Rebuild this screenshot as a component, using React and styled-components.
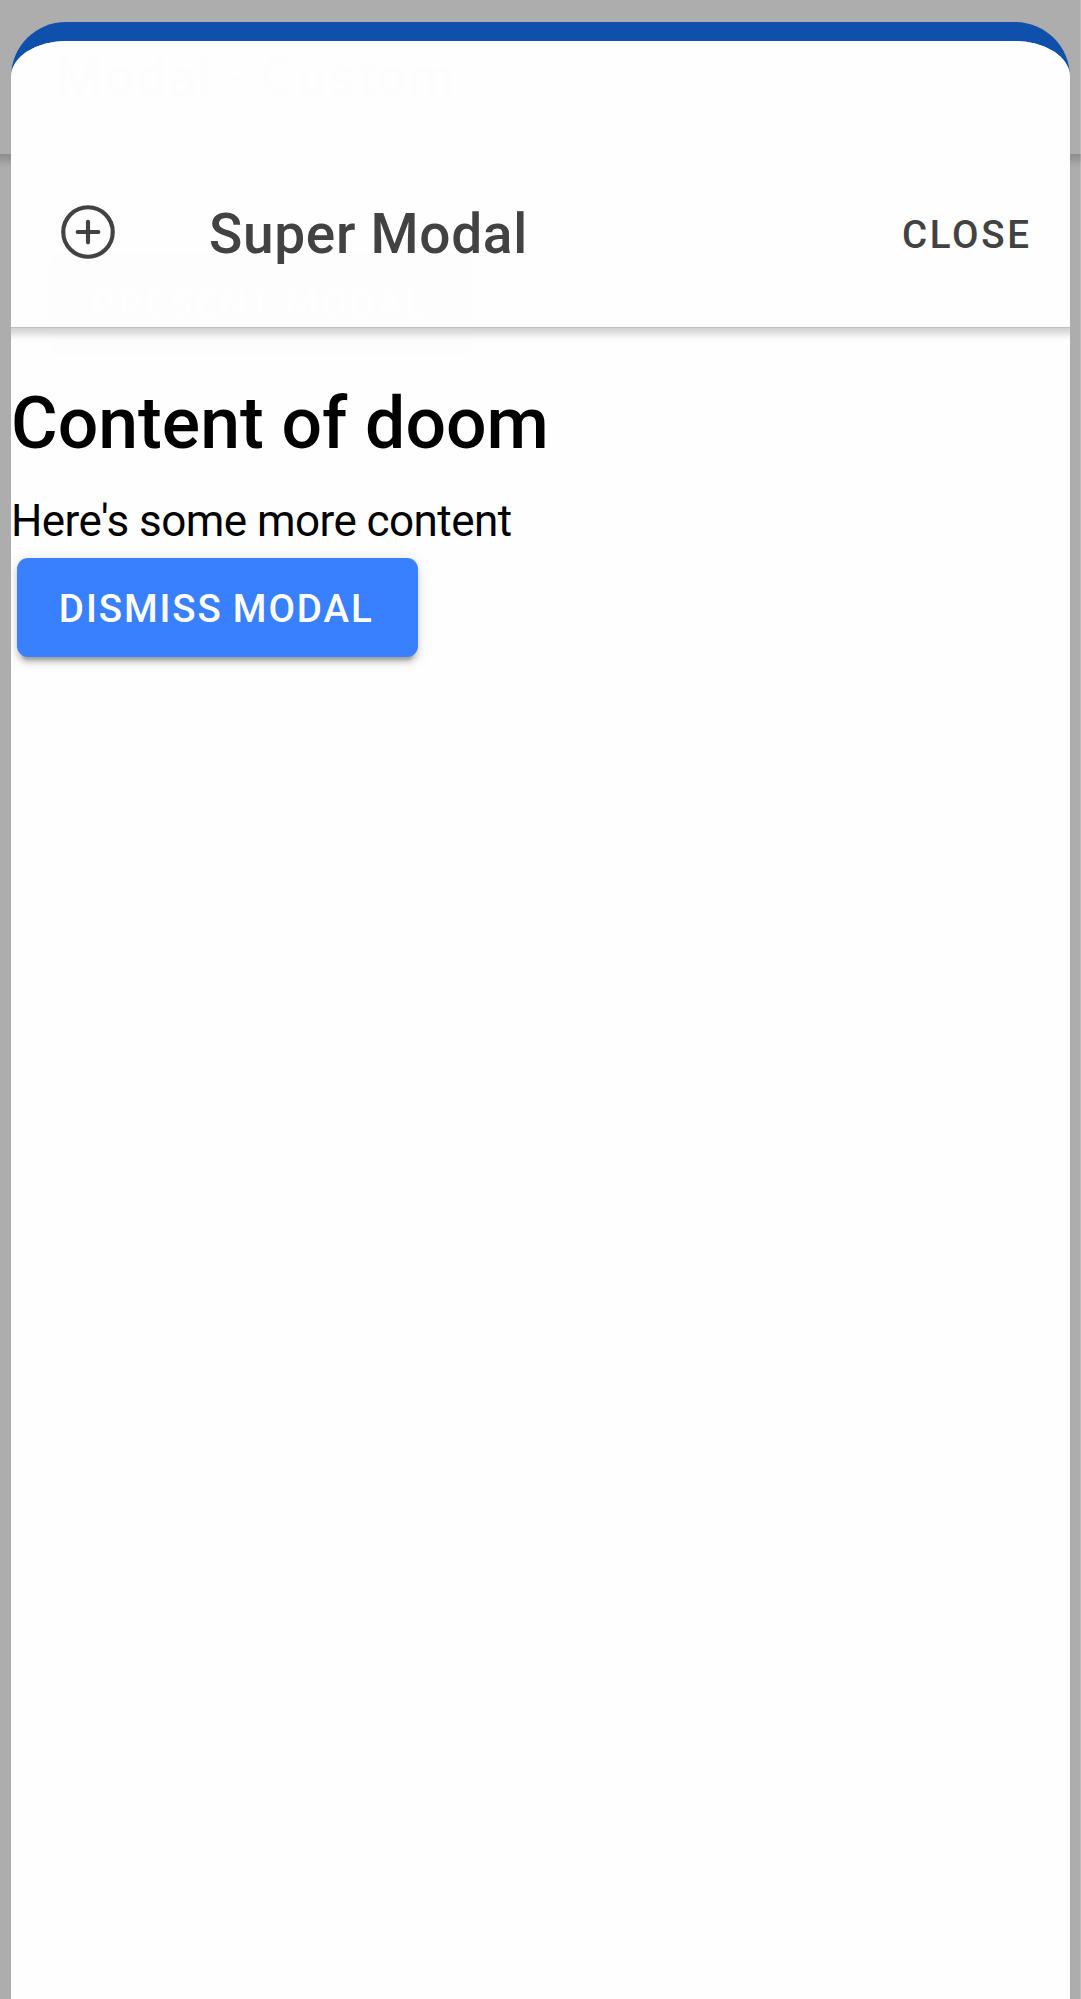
import React from "react";
import styled, { createGlobalStyle, css } from "styled-components";

const GlobalStyle = createGlobalStyle`
  * { box-sizing: border-box; }
  html, body { margin: 0; padding: 0; background: #fff; }
  body { font-family: Roboto, "Liberation Sans", sans-serif; overflow: hidden; }
`;

const headerShadow = css`
  position: relative;
  &::after {
    content: "";
    position: absolute;
    left: 0;
    right: 0;
    top: 100%;
    height: 14px;
    background: linear-gradient(
      rgba(0, 0, 0, 0.19),
      rgba(0, 0, 0, 0.13) 35%,
      rgba(0, 0, 0, 0.05) 65%,
      rgba(0, 0, 0, 0.015) 85%,
      transparent
    );
  }
`;

const Screen = styled.div`
  position: relative;
  width: 1081px;
  height: 1999px;
  overflow: hidden;
  background: #fff;
`;

const PageHeader = styled.header`
  ${headerShadow}
  display: flex;
  align-items: center;
  height: 154px;
  padding: 0 55px;
  background: #fff;
`;

const PageTitle = styled.div`
  font-size: 55px;
  font-weight: 500;
  letter-spacing: 0.0125em;
  line-height: 1;
  color: #424242;
`;

const PageBody = styled.main`
  padding: 99px 49px;
`;

const Button = styled.button`
  display: flex;
  align-items: center;
  justify-content: center;
  height: 99px;
  padding: 1px 44.2px 0 42.35px;
  border: 0;
  border-radius: 11px;
  background: #3880ff;
  color: #fff;
  font: 500 38.5px Roboto, "Liberation Sans", sans-serif;
  letter-spacing: ${(p) => p.$tracking || "1.9px"};
  word-spacing: -1.3px;
  text-transform: uppercase;
  white-space: nowrap;
  box-shadow: 0 8.25px 2.75px -5.5px rgba(0, 0, 0, 0.2),
    0 5.5px 5.5px 0 rgba(0, 0, 0, 0.14), 0 2.75px 13.75px 0 rgba(0, 0, 0, 0.12);
`;

const Overlay = styled.div`
  position: absolute;
  inset: 0;
  display: flex;
  padding: 22px 11.25px 0 11px;
  background: rgba(0, 0, 0, 0.32);
  box-shadow: inset -1px 0 rgba(255, 255, 255, 0.2);
`;

const Modal = styled.section`
  flex: 1;
  display: flex;
  flex-direction: column;
  overflow: hidden;
  border-top: 19px solid #0d50ab;
  border-radius: 55px 55px 0 0;
  background: #fff;
  opacity: 0.994;
`;

const ModalHeader = styled.header`
  ${headerShadow}
  display: flex;
  align-items: center;
  height: 287px;
  flex: none;
  padding: 96px 38px 0 44px;
  color: #424242;
  background: #fff;
  border-bottom: 1px solid #ececec;
`;

const IconSlot = styled.svg`
  display: block;
  width: 66px;
  height: 66px;
  fill: none;
  stroke: currentColor;
  stroke-linecap: round;
  stroke-linejoin: round;
  stroke-width: 32px;
`;

const Title = styled.h2`
  flex: 1;
  margin: 4px 0 0 88px;
  font-size: 55px;
  font-weight: 500;
  letter-spacing: 0.0125em;
  line-height: 1;
`;

const CloseButton = styled.button`
  margin-top: 4px;
  padding: 0;
  border: 0;
  background: none;
  color: inherit;
  font: 500 38.5px Roboto, "Liberation Sans", sans-serif;
  letter-spacing: 2.7px;
`;

const ModalContent = styled.div`
  display: flex;
  flex-direction: column;
  align-items: flex-start;
  color: #000;
`;

const Heading = styled.h1`
  margin: 53px 0 28.5px;
  font-size: 71.5px;
  font-weight: 500;
  line-height: 1.2;
`;

const Text = styled.p`
  margin: 0;
  font-size: 44px;
  line-height: 52px;
  letter-spacing: -0.55px;
`;

const Action = styled.div`
  padding: 11px 5.5px;
`;

function AddCircle() {
  return (
    <IconSlot viewBox="0 0 512 512" aria-hidden="true">
      <path d="M448 256c0-106-86-192-192-192S64 150 64 256s86 192 192 192 192-86 192-192z" />
      <path d="M256 176v160M336 256H176" />
    </IconSlot>
  );
}

export default function App() {
  return (
    <>
      <GlobalStyle />
      <Screen>
        <PageHeader>
          <PageTitle>Modal - Custom</PageTitle>
        </PageHeader>
        <PageBody>
          <Button $tracking="2.5px">Present Modal</Button>
        </PageBody>
        <Overlay>
          <Modal>
            <ModalHeader>
              <AddCircle />
              <Title>Super Modal</Title>
              <CloseButton>CLOSE</CloseButton>
            </ModalHeader>
            <ModalContent>
              <Heading>Content of doom</Heading>
              <Text>Here's some more content</Text>
              <Action>
                <Button>Dismiss Modal</Button>
              </Action>
            </ModalContent>
          </Modal>
        </Overlay>
      </Screen>
    </>
  );
}
